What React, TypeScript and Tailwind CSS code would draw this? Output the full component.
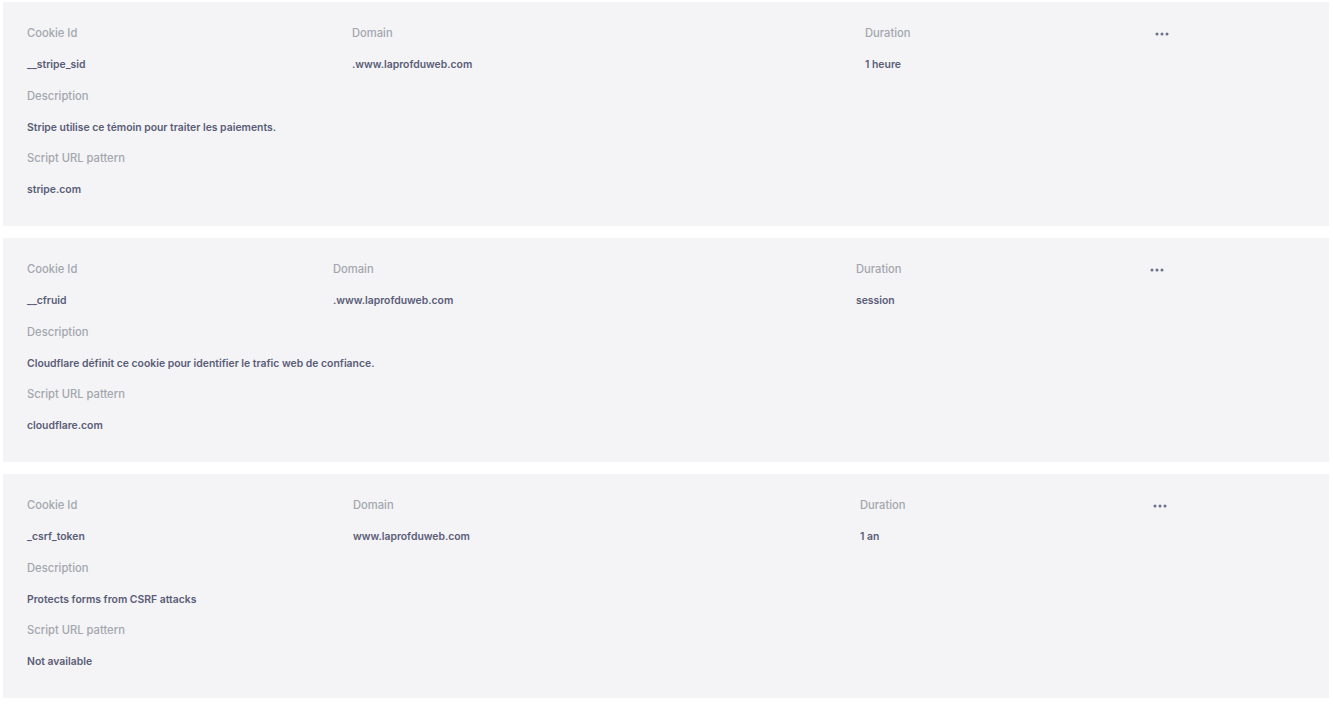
const cookies = [
  {
    id: '__stripe_sid',
    domain: '.www.laprofduweb.com',
    duration: '1 heure',
    description: 'Stripe utilise ce témoin pour traiter les paiements.',
    pattern: 'stripe.com',
    cols: 'grid-cols-[325px_513px_290px_1fr]',
  },
  {
    id: '__cfruid',
    domain: '.www.laprofduweb.com',
    duration: 'session',
    description: 'Cloudflare définit ce cookie pour identifier le trafic web de confiance.',
    pattern: 'cloudflare.com',
    cols: 'grid-cols-[306px_523px_294px_1fr]',
  },
  {
    id: '_csrf_token',
    domain: 'www.laprofduweb.com',
    duration: '1 an',
    description: 'Protects forms from CSRF attacks',
    pattern: 'Not available',
    cols: 'grid-cols-[326px_507px_293px_1fr]',
  },
]

const label = 'h-[31.3px] flex items-center text-[11.2px] font-medium text-[#a3a6ae]'
const value = 'h-[31.3px] flex items-center text-[10.4px] font-semibold text-[#5a5d77]'

const Dots = () => (
  <svg width="14" height="4" viewBox="0 0 14 4" className="text-[#6b6f8a]">
    <circle cx="2" cy="2" r="1.5" fill="currentColor" />
    <circle cx="7" cy="2" r="1.5" fill="currentColor" />
    <circle cx="12" cy="2" r="1.5" fill="currentColor" />
  </svg>
)

export default function App() {
  return (
    <div className="min-h-[704px] bg-white pt-[2px] pl-[3px] pr-[4px] flex flex-col gap-[12px] font-['Inter',sans-serif]">
      {cookies.map((c) => (
        <div key={c.id} className="h-[224px] bg-[#f4f4f6] pl-[24px] pt-[16px]">
          <div className={`grid ${c.cols}`}>
            <div className={label}>Cookie Id</div>
            <div className={label}>Domain</div>
            <div className={label}>Duration</div>
            <div className="h-[31.3px] flex items-center">
              <Dots />
            </div>
            <div className={value}>{c.id}</div>
            <div className={value}>{c.domain}</div>
            <div className={value}>{c.duration}</div>
            <div />
          </div>
          <div className={label}>Description</div>
          <div className={value}>{c.description}</div>
          <div className={label}>Script URL pattern</div>
          <div className={value}>{c.pattern}</div>
        </div>
      ))}
    </div>
  )
}
